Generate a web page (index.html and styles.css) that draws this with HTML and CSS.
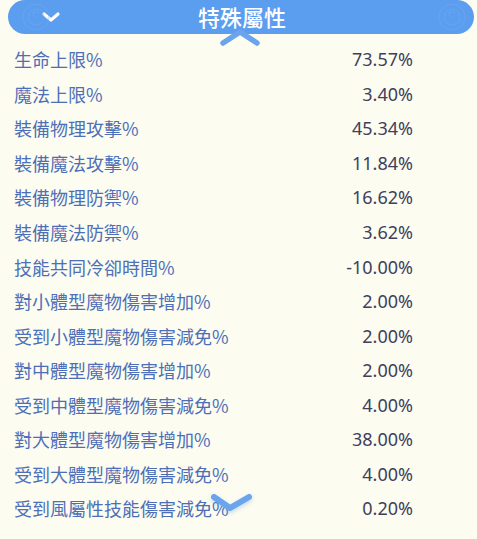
FILE: index.html
```html
<!DOCTYPE html>
<html>
<head>
<meta charset="utf-8">
<link rel="stylesheet" href="styles.css">
</head>
<body>
<div class="panel">
  <div class="header">
    <svg class="hdr-chev" width="20" height="12" viewBox="0 0 20 12"><path d="M3 3 L10 9 L17 3" fill="none" stroke="#fff" stroke-width="3.2" stroke-linecap="round" stroke-linejoin="round"/></svg>
    <div class="title">特殊屬性</div>
    <svg class="swirl swirl-l" width="60" height="34" viewBox="0 0 60 34"><g fill="none" stroke="#78aef1" stroke-width="1"><circle cx="30" cy="17" r="13"/><circle cx="30" cy="17" r="8"/><path d="M30 17 a3 3 0 1 1 3 -3"/></g></svg>
    <svg class="swirl swirl-r" width="60" height="34" viewBox="0 0 60 34"><g fill="none" stroke="#78aef1" stroke-width="1"><circle cx="30" cy="17" r="13"/><circle cx="30" cy="17" r="8"/><path d="M30 17 a3 3 0 1 1 3 -3"/></g></svg>
  </div>
  <svg class="up-chev" width="44" height="20" viewBox="0 0 44 20"><path d="M5 16 L22 5 L39 16" fill="none" stroke="#6aa4ec" stroke-width="5.5" stroke-linecap="round" stroke-linejoin="round"/></svg>
  <div class="list">
    <div class="row"><span class="label">生命上限%</span><span class="value">73.57%</span></div>
    <div class="row"><span class="label">魔法上限%</span><span class="value">3.40%</span></div>
    <div class="row"><span class="label">裝備物理攻擊%</span><span class="value">45.34%</span></div>
    <div class="row"><span class="label">裝備魔法攻擊%</span><span class="value">11.84%</span></div>
    <div class="row"><span class="label">裝備物理防禦%</span><span class="value">16.62%</span></div>
    <div class="row"><span class="label">裝備魔法防禦%</span><span class="value">3.62%</span></div>
    <div class="row"><span class="label">技能共同冷卻時間%</span><span class="value">-10.00%</span></div>
    <div class="row"><span class="label">對小體型魔物傷害增加%</span><span class="value">2.00%</span></div>
    <div class="row"><span class="label">受到小體型魔物傷害減免%</span><span class="value">2.00%</span></div>
    <div class="row"><span class="label">對中體型魔物傷害增加%</span><span class="value">2.00%</span></div>
    <div class="row"><span class="label">受到中體型魔物傷害減免%</span><span class="value">4.00%</span></div>
    <div class="row"><span class="label">對大體型魔物傷害增加%</span><span class="value">38.00%</span></div>
    <div class="row"><span class="label">受到大體型魔物傷害減免%</span><span class="value">4.00%</span></div>
    <div class="row"><span class="label">受到風屬性技能傷害減免%</span><span class="value">0.20%</span></div>
  </div>
  <svg class="down-chev" width="46" height="24" viewBox="0 0 46 24"><path d="M5 5 L21 16 L40 5" fill="none" stroke="#6aa4ec" stroke-width="6" stroke-linecap="round" stroke-linejoin="round"/></svg>
</div>
</body>
</html>
```

FILE: styles.css
```css
html, body {
  margin: 0;
  padding: 0;
  background: #fcfcf0;
}
.panel {
  position: relative;
  width: 477px;
  height: 539px;
  overflow: hidden;
  background: #fcfcf0;
  font-family: "Noto Sans", "Noto Sans CJK TC", sans-serif;
}
.header {
  position: relative;
  margin: 0 3px 0 8px;
  height: 34px;
  border-radius: 17px;
  background: #5b9def;
  display: flex;
  align-items: center;
  justify-content: center;
  overflow: hidden;
}
.hdr-chev {
  position: absolute;
  left: 33px;
  top: 11px;
}
.swirl {
  position: absolute;
  top: 0;
  opacity: 0.45;
}
.swirl-l { left: -2px; }
.swirl-r { right: -8px; }
.title {
  color: #ffffff;
  font-family: "Noto Sans CJK TC", sans-serif;
  font-size: 22px;
  font-weight: 500;
  letter-spacing: 0;
  margin-left: 2px;
  margin-top: -3px;
}
.up-chev {
  position: absolute;
  left: 218px;
  top: 27px;
}
.down-chev {
  position: absolute;
  left: 209px;
  top: 492px;
  filter: drop-shadow(0 2px 2px rgba(90, 150, 230, 0.35));
}
.list {
  padding: 8px 64px 0 14px;
}
.row {
  display: flex;
  justify-content: space-between;
  align-items: center;
  height: 34.55px;
}
.label {
  color: #4e6fb8;
  font-family: "Noto Sans CJK TC", sans-serif;
  font-size: 18px;
}
.value {
  color: #3f3f5e;
  font-family: "Noto Sans", sans-serif;
  font-size: 18px;
}
```
